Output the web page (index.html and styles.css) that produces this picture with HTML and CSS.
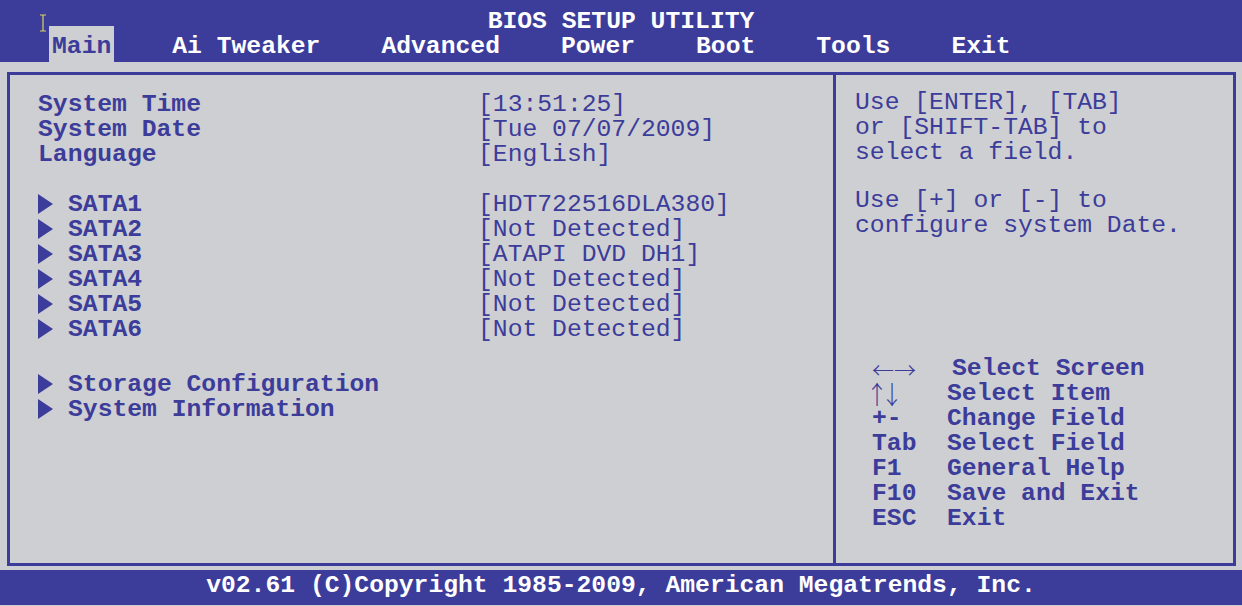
FILE: index.html
```html
<!DOCTYPE html>
<html lang="en">
<head>
    <meta charset="UTF-8">
    <title>BIOS Setup Utility</title>
    <link rel="stylesheet" href="styles.css">
</head>
<body>

<div class="header">
    <svg class="cursor" width="8" height="18" viewBox="0 0 8 18">
        <path d="M1 1h6M4 1v16M1 17h6" stroke="#d6d35a" stroke-width="1.2" fill="none"/>
    </svg>
    <div class="title">BIOS SETUP UTILITY</div>
    <div class="menu">
        <span class="tab active">Main</span>
        <span class="tab">Ai Tweaker</span>
        <span class="tab">Advanced</span>
        <span class="tab">Power</span>
        <span class="tab">Boot</span>
        <span class="tab">Tools</span>
        <span class="tab">Exit</span>
    </div>
</div>

<div class="frame">
    <div class="settings">
        <div class="row"><span class="label">System Time</span><span class="value">[13:51:25]</span></div>
        <div class="row"><span class="label">System Date</span><span class="value">[Tue 07/07/2009]</span></div>
        <div class="row"><span class="label">Language</span><span class="value">[English]</span></div>
        <div class="row blank"></div>
        <div class="row"><span class="label"><i class="arrow"></i>SATA1</span><span class="value">[HDT722516DLA380]</span></div>
        <div class="row"><span class="label"><i class="arrow"></i>SATA2</span><span class="value">[Not Detected]</span></div>
        <div class="row"><span class="label"><i class="arrow"></i>SATA3</span><span class="value">[ATAPI DVD DH1]</span></div>
        <div class="row"><span class="label"><i class="arrow"></i>SATA4</span><span class="value">[Not Detected]</span></div>
        <div class="row"><span class="label"><i class="arrow"></i>SATA5</span><span class="value">[Not Detected]</span></div>
        <div class="row"><span class="label"><i class="arrow"></i>SATA6</span><span class="value">[Not Detected]</span></div>
        <div class="row blank tall"></div>
        <div class="row"><span class="label"><i class="arrow"></i>Storage Configuration</span></div>
        <div class="row"><span class="label"><i class="arrow"></i>System Information</span></div>
    </div>

    <div class="help">
        <div class="help-text">
            <div>Use [ENTER], [TAB]</div>
            <div>or [SHIFT-TAB] to</div>
            <div>select a field.</div>
            <div class="gap"></div>
            <div>Use [+] or [-] to</div>
            <div>configure system Date.</div>
        </div>
        <div class="keys">
            <div class="key-row first"><span class="key sym">&larr;&rarr;</span><span class="desc">Select Screen</span></div>
            <div class="key-row"><span class="key sym updown">&uarr;&darr;</span><span class="desc">Select Item</span></div>
            <div class="key-row"><span class="key">+-</span><span class="desc">Change Field</span></div>
            <div class="key-row"><span class="key">Tab</span><span class="desc">Select Field</span></div>
            <div class="key-row"><span class="key">F1</span><span class="desc">General Help</span></div>
            <div class="key-row"><span class="key">F10</span><span class="desc">Save and Exit</span></div>
            <div class="key-row"><span class="key">ESC</span><span class="desc">Exit</span></div>
        </div>
    </div>
</div>

<div class="footer">v02.61 (C)Copyright 1985-2009, American Megatrends, Inc.</div>

</body>
</html>
```

FILE: styles.css
```css
body {
    margin: 0;
    background-color: #cecfd2;
    color: #3c3c9a;
    font-family: "Liberation Mono", "Courier New", monospace;
    font-size: 24.7px;
    line-height: 25px;
}
.header {
    position: relative;
    height: 62px;
    background-color: #3c3c9a;
    color: #ffffff;
    font-weight: bold;
}
.cursor {
    position: absolute;
    left: 39px;
    top: 14px;
}
.title {
    text-align: center;
    padding-top: 11px;
    line-height: 20px;
    height: 15px;
}
.menu {
    display: flex;
    gap: 55px;
    padding-left: 49px;
}
.tab {
    padding: 8px 3px 3px;
    line-height: 25px;
}
.tab.active {
    background-color: #cecfd2;
    color: #3c3c9a;
}
.frame {
    display: flex;
    height: 488px;
    margin: 10px 6px 0 7px;
    border: 3px solid #3c3c9a;
}
.settings {
    width: 795px;
    padding: 17px 0 0 28px;
}
.row {
    display: flex;
    height: 25px;
}
.row.tall {
    height: 30px;
}
.label {
    width: 440px;
    font-weight: bold;
    display: flex;
    align-items: center;
}
.arrow {
    display: inline-block;
    width: 0;
    height: 0;
    border-left: 15px solid #3c3c9a;
    border-top: 10px solid transparent;
    border-bottom: 10px solid transparent;
    margin: -2px 15px 0 0;
}
.value {
    white-space: pre;
}
.help {
    flex: 1;
    display: flex;
    flex-direction: column;
    border-left: 3px solid #3c3c9a;
    padding: 15px 0 32px 19px;
}
.help-text .gap {
    height: 23px;
}
.keys {
    margin-top: auto;
    padding-left: 17px;
    font-weight: bold;
}
.key-row {
    display: flex;
    height: 25px;
}
.key {
    width: 75px;
}
.key.sym {
    font-family: "Noto Sans CJK JP", sans-serif;
    font-weight: 300;
    font-size: 22px;
    line-height: 25px;
}
.key.updown {
    letter-spacing: -7px;
    margin-left: -6px;
    padding-right: 6px;
    transform: scaleY(1.15);
}
.key-row.first .desc {
    padding-left: 5px;
}
.footer {
    margin-top: 4px;
    height: 35px;
    line-height: 30px;
    background-color: #3c3c9a;
    color: #ffffff;
    font-weight: bold;
    text-align: center;
}
```
